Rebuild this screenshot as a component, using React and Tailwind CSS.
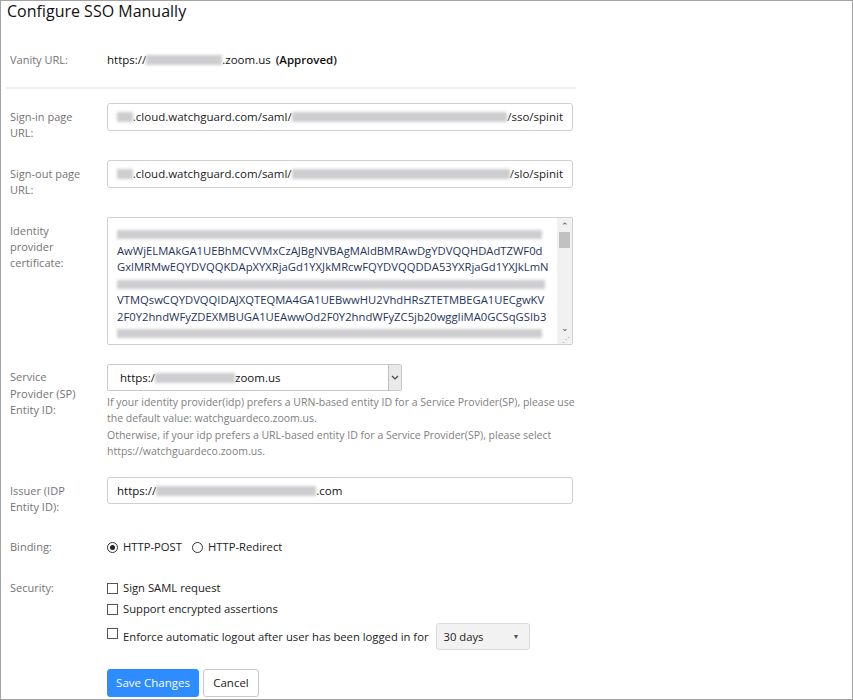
import React from "react";

const Blur = ({ w, h = 10, className = "" }) => (
  <span
    className={`inline-block align-middle bg-[#cdcdd0] blur-[1.5px] ${className}`}
    style={{ width: w, height: h }}
  />
);

function Label({ children }) {
  return (
    <div className="w-[97px] shrink-0 pt-[6px] text-[11px] leading-[16px] text-[#747474]">
      {children}
    </div>
  );
}

function TextBox({ children }) {
  return (
    <div className="flex h-[28px] w-[466px] items-center rounded-[3px] border border-[#cfcfcf] bg-white px-[9px] text-[11.5px] text-[#222]">
      {children}
    </div>
  );
}

function Check({ children, className = "" }) {
  return (
    <div className={`flex items-center ${className}`}>
      <span className="mr-[5px] inline-block h-[11px] w-[11px] border border-[#555] bg-white" />
      <span>{children}</span>
    </div>
  );
}

export default function App() {
  return (
    <div
      className="h-[700px] w-[853px] overflow-hidden border border-[#a3a3a3] bg-white text-[#222]"
      style={{ fontFamily: '"Open Sans", "Noto Sans", sans-serif' }}
    >
      <h1 className="pl-[6px] text-[16px] leading-[20px] text-[#111]">Configure SSO Manually</h1>

      <div className="mt-[31px] flex h-[16px] items-center pl-[9px] text-[11px]">
        <div className="w-[97px] text-[#747474]">Vanity URL:</div>
        <div className="flex items-center text-[11.5px] text-[#111]">
          https://
          <Blur w={76} />
          .zoom.us
          <span className="ml-[5px] font-semibold">(Approved)</span>
        </div>
      </div>

      <div className="ml-[5px] mt-[19px] w-[570px] border-t-2 border-[#efefef]" />

      <div className="mt-[14px] pl-[9px]">
        <div className="flex h-[57px] items-start">
          <Label>
            Sign-in page
            <br />
            URL:
          </Label>
          <TextBox>
            <Blur w={16} />
            .cloud.watchguard.com/saml/
            <Blur w={218} />
            /sso/spinit
          </TextBox>
        </div>

        <div className="flex h-[57px] items-start">
          <Label>
            Sign-out page
            <br />
            URL:
          </Label>
          <TextBox>
            <Blur w={16} />
            .cloud.watchguard.com/saml/
            <Blur w={222} />
            /slo/spinit
          </TextBox>
        </div>

        <div className="flex h-[147px] items-start">
          <Label>
            Identity
            <br />
            provider
            <br />
            certificate:
          </Label>
          <div className="relative h-[128px] w-[466px] overflow-hidden rounded-[2px] border border-[#cfcfcf] bg-white">
            <div className="pl-[9px] pr-[24px] pt-[8px] text-[11.25px] leading-[16.5px] whitespace-nowrap text-[#1f3559]">
              <div><Blur w={425} h={9} /></div>
              <div>AwWjELMAkGA1UEBhMCVVMxCzAJBgNVBAgMAldBMRAwDgYDVQQHDAdTZWF0d</div>
              <div>GxlMRMwEQYDVQQKDApXYXRjaGd1YXJkMRcwFQYDVQQDDA53YXRjaGd1YXJkLmN</div>
              <div><Blur w={428} h={9} /></div>
              <div>VTMQswCQYDVQQIDAJXQTEQMA4GA1UEBwwHU2VhdHRsZTETMBEGA1UECgwKV</div>
              <div>2F0Y2hndWFyZDEXMBUGA1UEAwwOd2F0Y2hndWFyZC5jb20wggIiMA0GCSqGSIb3</div>
              <div><Blur w={425} h={9} /></div>
              <div><Blur w={260} h={5} /></div>
            </div>
            <div className="absolute right-0 top-0 flex h-full w-[15px] flex-col items-center bg-[#f1f1f1]">
              <span className="mt-[3px] text-[9px] leading-[9px] text-[#505050]">&#8963;</span>
              <span className="mt-[2px] h-[16px] w-[11px] bg-[#c1c1c1]" />
              <div className="flex-1" />
              <span className="mb-[12px] text-[9px] leading-[9px] text-[#505050]">&#8964;</span>
            </div>
            <span className="absolute bottom-[1px] right-[2px] text-[8px] leading-[8px] text-[#999]">⋰</span>
          </div>
        </div>

        <div className="flex h-[113px] items-start">
          <div className="w-[97px] shrink-0 pt-[5px] text-[11px] leading-[16.5px] text-[#747474]">
            Service
            <br />
            Provider (SP)
            <br />
            Entity ID:
          </div>
          <div>
            <div className="flex h-[27px] w-[295px] items-stretch rounded-[2px] border border-[#c8c8c8] bg-white">
              <div className="flex flex-1 items-center pl-[12px] text-[11.5px] text-[#111]">
                https:/
                <Blur w={80} />
                zoom.us
              </div>
              <div className="flex w-[13px] items-center justify-center border-l border-[#bdbdbd] bg-[#e9e9e9]">
                <svg width="8" height="5" viewBox="0 0 8 5">
                  <path d="M1 1l3 3 3-3" fill="none" stroke="#444" strokeWidth="1.2" />
                </svg>
              </div>
            </div>
            <div className="mt-[3px] w-[470px] text-[10.5px] leading-[16px] text-[#808080]">
              <p>
                If your identity provider(idp) prefers a URN-based entity ID for a Service Provider(SP), please use the
                default value: watchguardeco.zoom.us.
              </p>
              <p className="mt-[1px]">
                Otherwise, if your idp prefers a URL-based entity ID for a Service Provider(SP), please select
                https://watchguardeco.zoom.us.
              </p>
            </div>
          </div>
        </div>

        <div className="flex h-[62px] items-start">
          <Label>
            Issuer (IDP
            <br />
            Entity ID):
          </Label>
          <div className="flex h-[27px] w-[466px] items-center rounded-[3px] border border-[#cfcfcf] bg-white px-[9px] text-[11.5px] text-[#111]">
            https://
            <Blur w={160} />
            .com
          </div>
        </div>

        <div className="flex h-[41px] items-start text-[11px] leading-[16px]">
          <div className="w-[97px] shrink-0 text-[#747474]">Binding:</div>
          <div className="flex items-center text-[11.25px] text-[#222]">
            <span className="mr-[5px] flex h-[11px] w-[11px] items-center justify-center rounded-full border border-[#333]">
              <span className="h-[5px] w-[5px] rounded-full bg-[#222]" />
            </span>
            HTTP-POST
            <span className="ml-[10px] mr-[5px] inline-block h-[11px] w-[11px] rounded-full border border-[#333]" />
            HTTP-Redirect
          </div>
        </div>

        <div className="flex items-start text-[11px] leading-[16px]">
          <div className="w-[97px] shrink-0 text-[#747474]">Security:</div>
          <div className="text-[11.25px] text-[#222]">
            <Check>Sign SAML request</Check>
            <Check className="mt-[5px]">Support encrypted assertions</Check>
            <div className="mt-[6px] flex items-center">
              <span className="mb-[7px] mr-[5px] inline-block h-[11px] w-[11px] border border-[#555] bg-white" />
              <span>Enforce automatic logout after user has been logged in for</span>
              <div className="ml-[7px] flex h-[27px] w-[94px] items-center justify-between rounded-[3px] border border-[#dcdcdc] bg-[#f2f2f2] pl-[7px] pr-[9px]">
                <span>30 days</span>
                <span className="text-[7px] text-[#555]">&#9660;</span>
              </div>
            </div>
            <div className="mt-[19px] flex gap-[4px]">
              <button className="h-[28px] w-[92px] rounded-[3px] border border-[#2d8cff] bg-[#2d8cff] text-[11.5px] text-white">
                Save Changes
              </button>
              <button className="h-[28px] w-[56px] rounded-[3px] border border-[#c8c8c8] bg-white text-[11.5px] text-[#222]">
                Cancel
              </button>
            </div>
          </div>
        </div>
      </div>
    </div>
  );
}
